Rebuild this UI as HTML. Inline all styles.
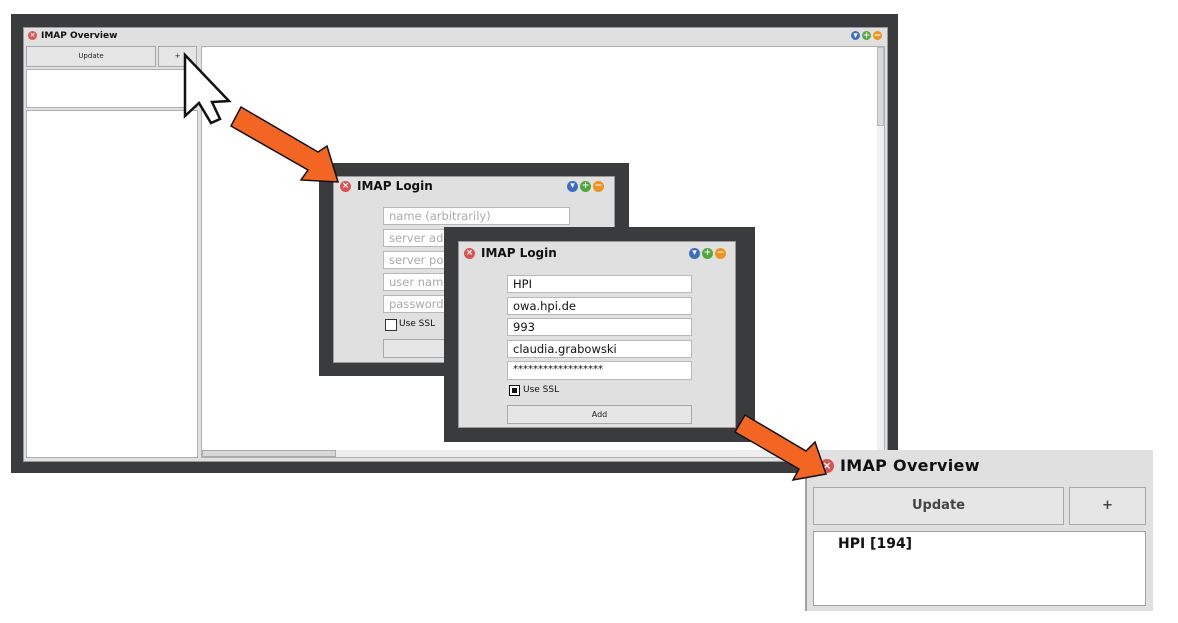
<!DOCTYPE html>
<html><head><meta charset="utf-8">
<style>
*{box-sizing:border-box;margin:0;padding:0}
body{width:1178px;height:623px;background:#fff;position:relative;overflow:hidden;font-family:"DejaVu Sans","Liberation Sans",sans-serif}
.a{position:absolute}
.dark{background:#3a3b3d;position:absolute}
.win{background:#e0e0e0;position:absolute;border:1px solid #9a9a9a}
.t{position:absolute;font-weight:bold;color:#111}
.x{position:absolute;border-radius:50%;background:#d9534f;color:#fff;font-weight:bold;text-align:center}
.box{position:absolute;background:#fff;border:1px solid #b0b0b0}
.btn{position:absolute;background:#e6e6e6;border:1px solid #a8a8a8;text-align:center;color:#222}
.f{position:absolute;background:#fff;border:1px solid #b8b8b8;font-size:11.5px;padding-left:5px;line-height:16px;color:#111}
.ph{color:#aaa}
.dots{position:absolute;display:flex;gap:2px}
.dots span{width:10px;height:10px;border-radius:50%;display:block;color:#fff;font-size:9px;line-height:10px;text-align:center;font-weight:bold}
</style></head><body>

<div class="dark" style="left:11px;top:14px;width:887px;height:459px"></div>
<div class="win" style="left:23px;top:27px;width:865px;height:435px"></div>
<div class="x" style="left:28px;top:31px;width:9px;height:9px;font-size:7px;line-height:9px">×</div>
<div class="t" style="left:41px;top:31px;font-size:9px">IMAP Overview</div>
<div class="dots" style="left:851px;top:31px"><span style="background:#3d6cc0;width:9px;height:9px">▾</span><span style="background:#4ea83a;width:9px;height:9px">+</span><span style="background:#f0921e;width:9px;height:9px">−</span></div>
<div class="btn" style="left:26px;top:46px;width:130px;height:21px;font-size:7px;line-height:19px">Update</div>
<div class="btn" style="left:158px;top:46px;width:39px;height:21px;font-size:7px;line-height:19px">+</div>
<div class="box" style="left:26px;top:69px;width:171px;height:39px"></div>
<div class="box" style="left:26px;top:110px;width:172px;height:348px"></div>
<div class="box" style="left:201px;top:46px;width:684px;height:412px"></div>
<div class="a" style="left:877px;top:47px;width:7px;height:410px;background:#f0f0f0"></div>
<div class="a" style="left:877px;top:47px;width:7px;height:79px;background:#d8d8d8;border:1px solid #b8b8b8"></div>
<div class="a" style="left:202px;top:450px;width:675px;height:7px;background:#eeeeee"></div>
<div class="a" style="left:202px;top:450px;width:134px;height:7px;background:#d8d8d8;border:1px solid #aaa"></div>

<svg class="a" style="left:0;top:0" width="1178" height="623">
<polygon points="185,55 185,116 199,103 211,123 220,119 212,102 229,101" fill="#fff" stroke="#111" stroke-width="2.5"/>
</svg>

<div class="dark" style="left:319px;top:163px;width:310px;height:213px"></div>
<div class="win" style="left:333px;top:176px;width:282px;height:187px"></div>
<div class="x" style="left:340px;top:181px;width:11px;height:11px;font-size:9px;line-height:11px">×</div>
<div class="t" style="left:357px;top:179px;font-size:12px">IMAP Login</div>
<div class="dots" style="left:567px;top:181px"><span style="background:#3d6cc0;width:11px;height:11px">▾</span><span style="background:#4ea83a;width:11px;height:11px">+</span><span style="background:#f0921e;width:11px;height:11px">−</span></div>
<div class="f ph" style="left:383px;top:207px;width:187px;height:18px">name (arbitrarily)</div>
<div class="f ph" style="left:383px;top:229px;width:187px;height:18px">server address</div>
<div class="f ph" style="left:383px;top:251px;width:187px;height:18px">server port</div>
<div class="f ph" style="left:383px;top:273px;width:187px;height:18px">user name</div>
<div class="f ph" style="left:383px;top:295px;width:187px;height:18px">password</div>
<div class="a" style="left:385px;top:319px;width:12px;height:12px;border:1px solid #333;background:#fff"></div>
<div class="a" style="left:399px;top:319px;font-size:9px;color:#111">Use SSL</div>
<div class="btn" style="left:383px;top:339px;width:187px;height:19px"></div>

<div class="dark" style="left:444px;top:227px;width:311px;height:215px"></div>
<div class="win" style="left:458px;top:241px;width:278px;height:187px"></div>
<div class="x" style="left:464px;top:248px;width:11px;height:11px;font-size:9px;line-height:11px">×</div>
<div class="t" style="left:481px;top:246px;font-size:12px">IMAP Login</div>
<div class="dots" style="left:689px;top:248px"><span style="background:#3d6cc0;width:11px;height:11px">▾</span><span style="background:#4ea83a;width:11px;height:11px">+</span><span style="background:#f0921e;width:11px;height:11px">−</span></div>
<div class="f" style="left:507px;top:275px;width:185px;height:18px">HPI</div>
<div class="f" style="left:507px;top:297px;width:185px;height:18px">owa.hpi.de</div>
<div class="f" style="left:507px;top:318px;width:185px;height:18px">993</div>
<div class="f" style="left:507px;top:340px;width:185px;height:18px">claudia.grabowski</div>
<div class="f" style="left:507px;top:361px;width:185px;height:19px;font-size:10px">******************</div>
<div class="a" style="left:509px;top:385px;width:11px;height:11px;border:1px solid #111;background:#fff"><div style="margin:2px;width:5px;height:5px;background:#111"></div></div>
<div class="a" style="left:523px;top:385px;font-size:9px;color:#111">Use SSL</div>
<div class="btn" style="left:507px;top:405px;width:185px;height:19px;font-size:8px;line-height:17px">Add</div>

<div class="a" style="left:805px;top:450px;width:348px;height:161px;background:#e0e0e0;border-left:2px solid #a0a0a0"></div>
<div class="x" style="left:820px;top:459px;width:14px;height:14px;font-size:11px;line-height:14px">×</div>
<div class="t" style="left:840px;top:456px;font-size:16px;letter-spacing:0.3px">IMAP Overview</div>
<div class="btn" style="left:813px;top:487px;width:251px;height:38px;font-size:13px;line-height:36px;font-weight:bold;color:#444">Update</div>
<div class="btn" style="left:1069px;top:487px;width:77px;height:38px;font-size:13px;line-height:36px;font-weight:bold;color:#444">+</div>
<div class="box" style="left:813px;top:531px;width:333px;height:75px;border-color:#a0a0a0"></div>
<div class="t" style="left:838px;top:536px;font-size:14px">HPI [194]</div>

<svg class="a" style="left:0;top:0" width="1178" height="623">
<polygon points="241,107 318,152 327,146 338,182 301,180 308,170 231,126" fill="#f26522" stroke="#111" stroke-width="1.5"/>
<polygon points="745,415 806,451 815,442 826,474 793,480 799,469 735,432" fill="#f26522" stroke="#111" stroke-width="1.5"/>
</svg>
</body></html>
